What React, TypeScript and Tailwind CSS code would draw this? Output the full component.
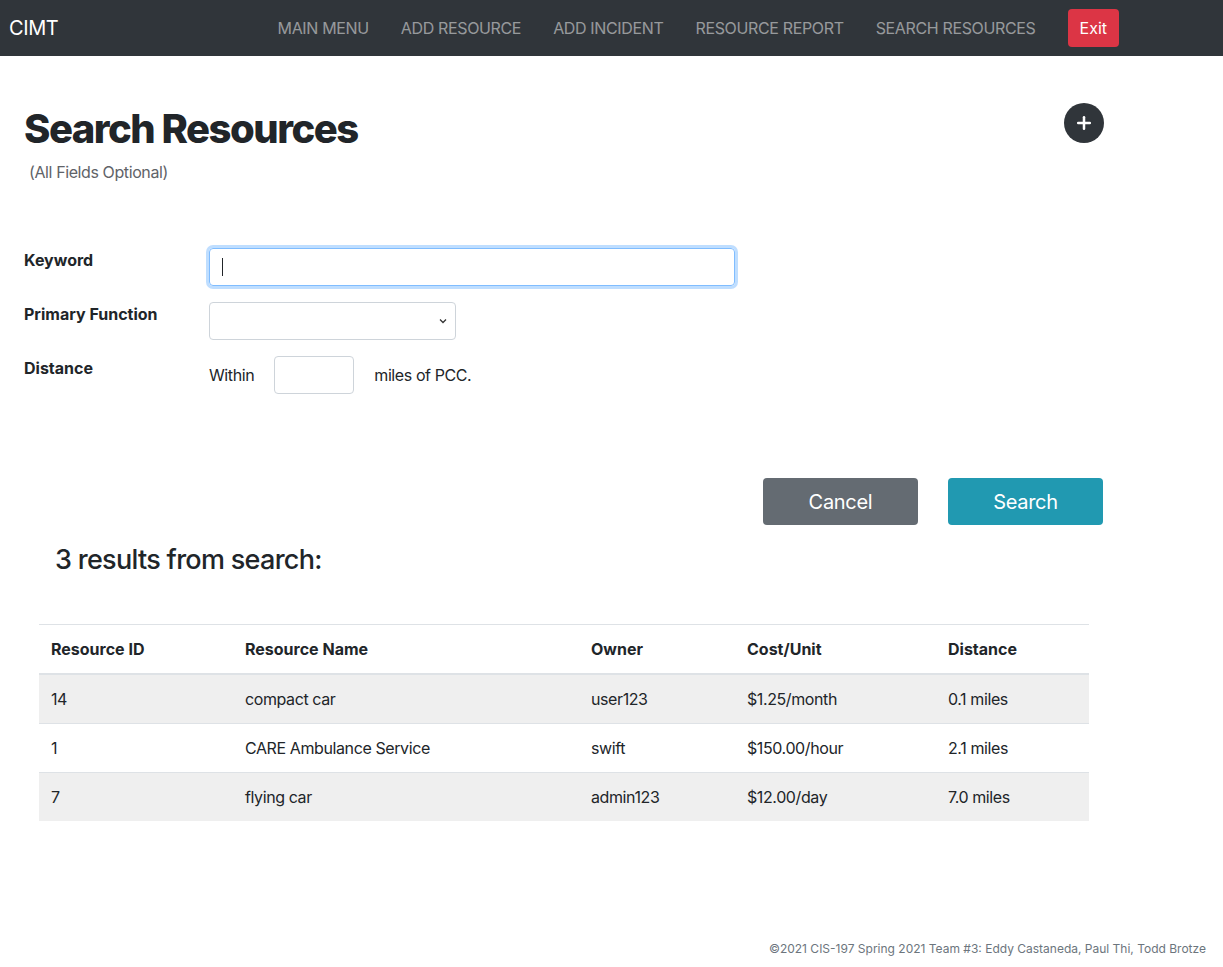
import { Plus } from "lucide-react"

const navLinks = ["MAIN MENU", "ADD RESOURCE", "ADD INCIDENT", "RESOURCE REPORT", "SEARCH RESOURCES"]

const results = [
  { id: "14", name: "compact car", owner: "user123", cost: "$1.25/month", distance: "0.1 miles" },
  { id: "1", name: "CARE Ambulance Service", owner: "swift", cost: "$150.00/hour", distance: "2.1 miles" },
  { id: "7", name: "flying car", owner: "admin123", cost: "$12.00/day", distance: "7.0 miles" },
]

export default function App() {
  return (
    <div className="min-h-[967px] flex flex-col bg-white text-[#212529] font-['Inter','Liberation_Sans',sans-serif]">
      {/* Navbar */}
      <nav className="h-14 bg-[#30353a] flex items-center pl-[9px] pr-[104px]">
        <span className="text-white text-xl tracking-[-0.4px]">CIMT</span>
        <ul className="ml-auto flex items-center">
          {navLinks.map((link) => (
            <li key={link} className="px-4 text-base tracking-[-0.35px] text-white/50">
              {link}
            </li>
          ))}
        </ul>
        <button className="ml-4 h-[38px] px-3 rounded bg-[#dc3545] text-white text-base">Exit</button>
      </nav>

      <main className="flex-1">
        <div className="ml-6 w-[1080px]">
          {/* Heading */}
          <div className="mt-[49px] flex items-start justify-between">
            <h1 className="text-[40px] leading-[48px] font-extrabold tracking-[-1.5px]">Search Resources</h1>
            <button className="-mt-0.5 w-10 h-10 rounded-full bg-[#30353a] text-white flex items-center justify-center">
              <Plus size={20} strokeWidth={3} />
            </button>
          </div>
          <p className="mt-[7px] ml-[5px] text-base leading-6 tracking-[-0.4px] text-[#5f6368]">(All Fields Optional)</p>

          {/* Form */}
          <div className="mt-16 flex flex-col gap-4">
            <div className="flex items-start">
              <label className="w-[185px] font-bold text-base leading-6">Keyword</label>
              <div className="w-[526px] h-[38px] rounded border border-[#80bdff] shadow-[0_0_0_3px_rgba(0,123,255,0.25)] flex items-center pl-3">
                <span className="w-px h-[18px] bg-[#212529]" />
              </div>
            </div>
            <div className="flex items-start">
              <label className="w-[185px] font-bold text-base leading-6">Primary Function</label>
              <div className="w-[247px] h-[38px] rounded border border-[#ced4da] flex items-center justify-end pr-2">
                <svg width="8" height="6" viewBox="0 0 8 6" fill="none">
                  <path d="M1 1.5 L4 4.5 L7 1.5" stroke="#333" strokeWidth="1.3" />
                </svg>
              </div>
            </div>
            <div className="flex items-start">
              <label className="w-[185px] font-bold text-base leading-6">Distance</label>
              <div className="flex items-center gap-5 tracking-[-0.4px]">
                <span className="text-base">Within</span>
                <div className="w-20 h-[38px] rounded border border-[#ced4da]" />
                <span className="text-base">miles of PCC.</span>
              </div>
            </div>
          </div>

          {/* Buttons */}
          <div className="mt-[84px] flex justify-end gap-[30px] pr-px">
            <button className="w-[155px] h-[47px] rounded bg-[#646b72] text-white text-xl tracking-[-0.3px]">Cancel</button>
            <button className="w-[155px] h-[47px] rounded bg-[#2199b1] text-white text-xl tracking-[-0.3px]">Search</button>
          </div>

          <h3 className="mt-[18px] ml-[31px] text-[27px] leading-[34px] font-medium tracking-[-0.7px]">3 results from search:</h3>
        </div>

        {/* Results table */}
        <table className="mt-[47px] ml-[39px] w-[1050px] border-collapse text-base text-left">
          <thead>
            <tr className="border-t border-b-2 border-[#dee2e6]">
              <th className="w-[194px] px-3 py-3 leading-6 font-bold">Resource ID</th>
              <th className="w-[346px] px-3 py-3 leading-6 font-bold">Resource Name</th>
              <th className="w-[156px] px-3 py-3 leading-6 font-bold">Owner</th>
              <th className="w-[201px] px-3 py-3 leading-6 font-bold">Cost/Unit</th>
              <th className="px-3 py-3 leading-6 font-bold">Distance</th>
            </tr>
          </thead>
          <tbody className="tracking-[-0.4px]">
            {results.map((r, i) => (
              <tr key={r.id} className={`border-t border-[#dee2e6] ${i % 2 === 0 ? "bg-[#efefef]" : "bg-white"}`}>
                <td className="px-3 py-3 leading-6">{r.id}</td>
                <td className="px-3 py-3 leading-6">{r.name}</td>
                <td className="px-3 py-3 leading-6">{r.owner}</td>
                <td className="px-3 py-3 leading-6">{r.cost}</td>
                <td className="px-3 py-3 leading-6">{r.distance}</td>
              </tr>
            ))}
          </tbody>
        </table>
      </main>

      {/* Footer */}
      <footer className="pr-[17px] pb-[9px] text-right text-xs leading-[18px] text-[#6c757d]">
        ©2021 CIS-197 Spring 2021 Team #3: Eddy Castaneda, Paul Thi, Todd Brotze
      </footer>
    </div>
  )
}
